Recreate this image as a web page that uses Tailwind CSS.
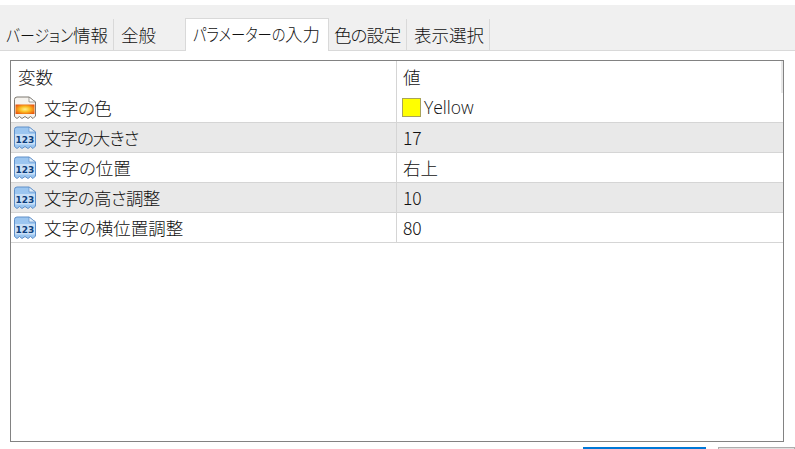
<!DOCTYPE html>
<html lang="ja">
<head>
    <meta charset="UTF-8">
    <title>パラメーターの入力</title>
    <script src="https://cdn.jsdelivr.net/npm/@tailwindcss/browser@4"></script>
</head>
<body class="bg-white w-[795px] h-[449px] overflow-hidden text-[17.5px] font-light leading-none whitespace-nowrap text-[#111] [font-family:'Noto_Sans_CJK_JP','Liberation_Sans',sans-serif] [font-feature-settings:'palt']">
    <svg class="hidden">
        <symbol id="num" viewBox="0 0 24 24">
            <path d="M1.5 3.5 Q1.5 1 4 1 H16 L22.5 6 V20 L20 22.5 L17.5 20.5 L15 22.5 L12 20.5 L9 22.5 L6.5 20.5 L4 22.5 L1.5 20.5 Z" fill="#9cc6f0" stroke="#5f8fc8"/>
            <path d="M16 1 V6 H22.5 Z" fill="#e3effa" stroke="#5f8fc8" stroke-width=".7"/>
            <rect x="2" y="8" width="20" height="10.5" fill="#c9e0f7"/>
            <text x="12" y="16.8" text-anchor="middle" font-size="9" font-weight="700" fill="#0f3f7d" font-family="DejaVu Sans">123</text>
        </symbol>
    </svg>

    <!-- tab strip -->
    <div class="mt-[5px] h-[46px] bg-[#f0f0f0] border-b border-[#d9d9d9] flex items-end">
        <div class="w-[114px] h-[31px] pl-[6px] pt-[7px] border-r border-[#d9d9d9]"><span class="inline-block origin-left scale-x-[.85] -mr-[12px]">バージョン</span>情報</div>
        <div class="w-[71px] h-[31px] pl-[7px] pt-[7px]">全般</div>
        <div class="w-[144px] h-[33px] pl-[7px] pt-[6px] -mb-px bg-white border-x border-t border-[#d9d9d9]"><span class="inline-block origin-left scale-x-[.82] -mr-[21px]">パラメーターの</span>入力</div>
        <div class="w-[78px] h-[31px] pl-[5px] pt-[7px] border-r border-[#d9d9d9]"><span class="tracking-[-1px]">色の</span>設定</div>
        <div class="w-[83px] h-[31px] pl-[7px] pt-[7px] border-r border-[#d9d9d9]">表示選択</div>
    </div>

    <!-- parameter table -->
    <div class="relative mt-[9px] ml-[10px] w-[774px] h-[382px] border border-[#828282]">
        <div class="h-[32px] flex items-center">
            <div class="w-[385px] pl-[7px]">変数</div>
            <div class="pl-[7px]">値</div>
        </div>
        <div class="h-[30px] flex border-b border-[#d5d5d5]">
            <div class="w-[385px] flex items-center pl-[2px]">
                <svg class="w-6 h-6 mr-[7px]" viewBox="0 0 24 24">
                    <defs>
                        <radialGradient id="flame" cx=".5" cy=".5" r=".6">
                            <stop offset="0" stop-color="#fef08a"/>
                            <stop offset=".45" stop-color="#fbbf24"/>
                            <stop offset="1" stop-color="#ea580c"/>
                        </radialGradient>
                    </defs>
                    <path d="M1.5 3.5 Q1.5 1 4 1 H16 L22.5 6 V20 L20 22.5 L17.5 20.5 L15 22.5 L12 20.5 L9 22.5 L6.5 20.5 L4 22.5 L1.5 20.5 Z" fill="#f6f3ee" stroke="#7d7870"/>
                    <path d="M16 1 V6 H22.5 Z" fill="#fff" stroke="#7d7870" stroke-width=".7"/>
                    <rect x="2.5" y="8.5" width="19" height="9.5" fill="url(#flame)"/>
                </svg>
                <span class="tracking-[-0.5px]">文字の色</span>
            </div>
            <div class="flex items-center pl-[6px]">
                <span class="w-[19px] h-[19px] mr-[3px] bg-[#ffff00] border border-[#a8a35a]"></span>
                <span class="[font-family:'Open_Sans','Liberation_Sans',sans-serif] text-[17.5px]">Yellow</span>
            </div>
        </div>
        <div class="h-[30px] flex border-b border-[#d5d5d5] bg-[#e9e9e9]">
            <div class="w-[385px] flex items-center pl-[2px]"><svg class="w-6 h-6 mr-[7px]"><use href="#num"/></svg><span class="tracking-[-1px]">文字の大きさ</span></div>
            <div class="flex items-center pl-[7px]">17</div>
        </div>
        <div class="h-[30px] flex border-b border-[#d5d5d5]">
            <div class="w-[385px] flex items-center pl-[2px]"><svg class="w-6 h-6 mr-[7px]"><use href="#num"/></svg>文字の位置</div>
            <div class="flex items-center pl-[7px]">右上</div>
        </div>
        <div class="h-[30px] flex border-b border-[#d5d5d5] bg-[#e9e9e9]">
            <div class="w-[385px] flex items-center pl-[2px]"><svg class="w-6 h-6 mr-[7px]"><use href="#num"/></svg><span class="tracking-[-0.6px]">文字の高さ調整</span></div>
            <div class="flex items-center pl-[7px]">10</div>
        </div>
        <div class="h-[30px] flex border-b border-[#d5d5d5]">
            <div class="w-[385px] flex items-center pl-[2px]"><svg class="w-6 h-6 mr-[7px]"><use href="#num"/></svg>文字の横位置調整</div>
            <div class="flex items-center pl-[7px]">80</div>
        </div>
        <!-- column divider runs over the rows -->
        <div class="absolute left-[385px] top-0 h-[181px] w-px bg-[#d5d5d5]"></div>
        <div class="absolute right-0 top-0 h-[32px] w-[2px] bg-[#e8e8e8]"></div>
    </div>

    <!-- buttons cut off by the window edge -->
    <div class="mt-[5px] flex">
        <div class="ml-[583px] w-[123px] h-[10px] border-2 border-[#0078d7] bg-[#f2f2f2]"></div>
        <div class="ml-[12px] w-[77px] h-[10px] border border-[#adadad] bg-[#e1e1e1]"></div>
    </div>
</body>
</html>
